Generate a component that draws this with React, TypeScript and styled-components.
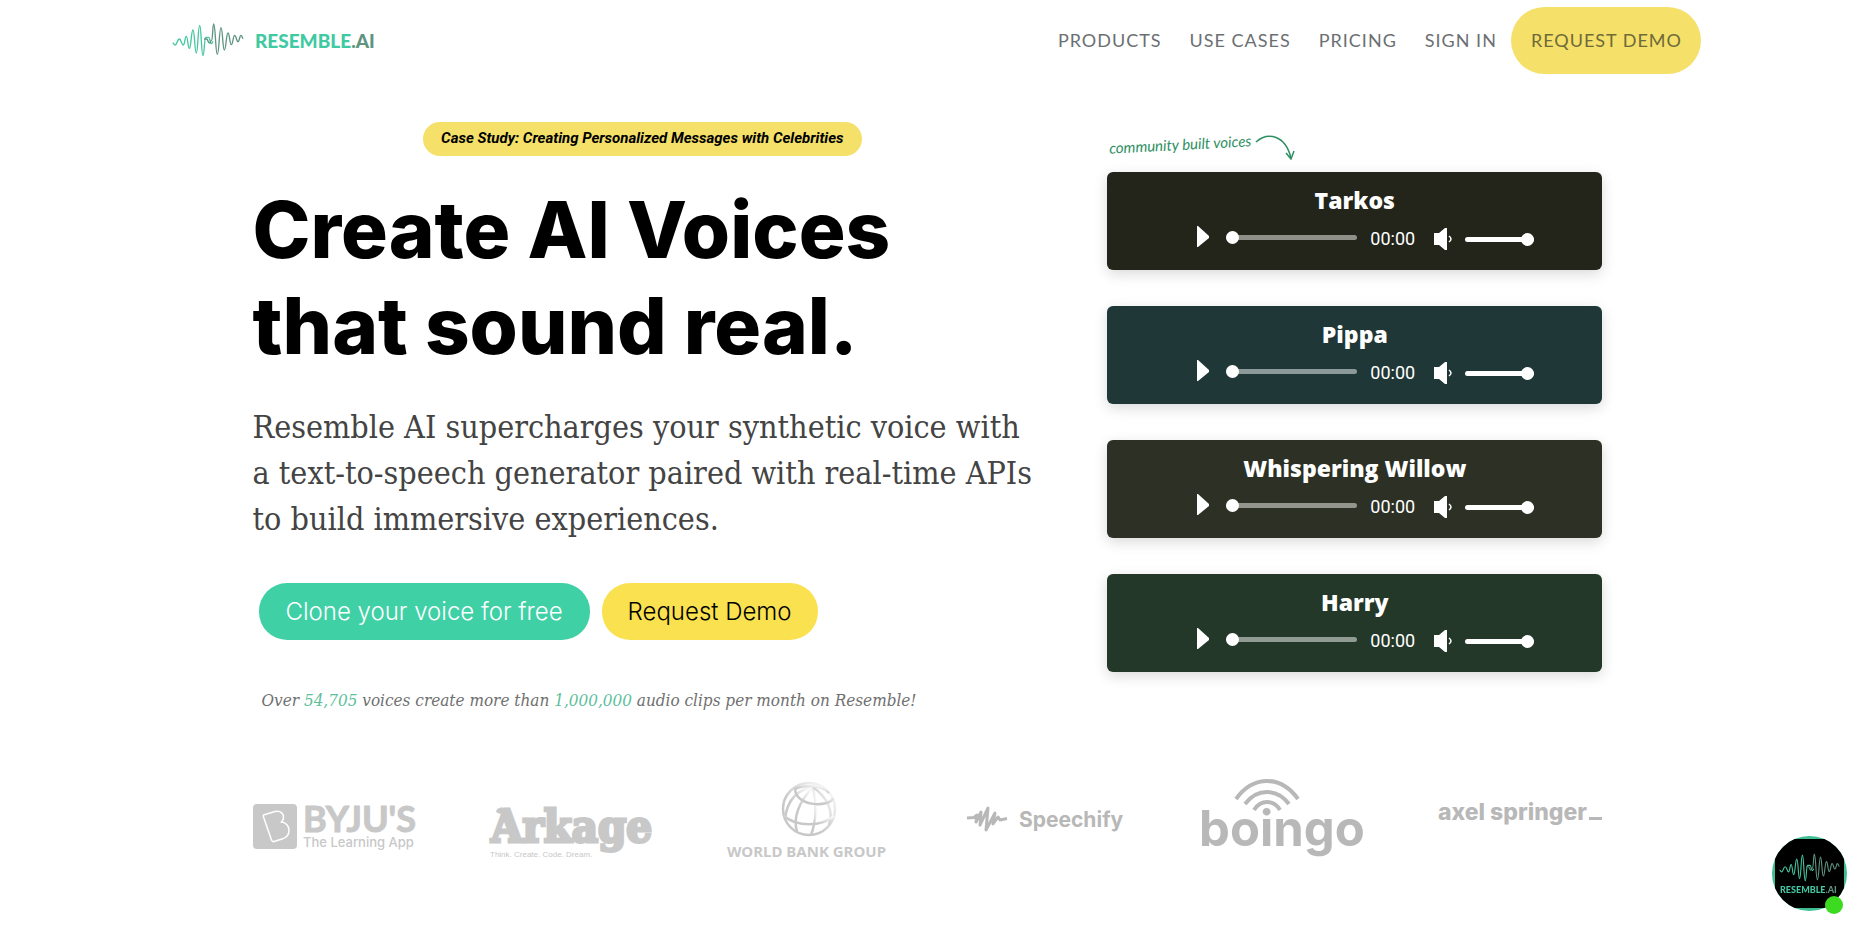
import React from "react";
import styled, { createGlobalStyle } from "styled-components";

const GlobalStyle = createGlobalStyle`
  * { box-sizing: border-box; }
  body { margin: 0; background: #fff; color: #000; font-family: Inter, sans-serif; }
  h1, h2, p { margin: 0; }
  a { color: inherit; text-decoration: none; }
`;

const slab = `"DejaVu Serif Condensed", "DejaVu Serif", serif`;

/* ---------- header ---------- */

const Header = styled.header`
  display: flex;
  align-items: center;
  justify-content: space-between;
  padding: 7px 164px 0 172px;
`;

const Brand = styled.a`
  display: flex;
  align-items: center;
  gap: 11px;
  font: 900 19px/24px Lato, sans-serif;
  color: #3fcaa2;
`;

const BrandSuffix = styled.span`
  color: #5f9480;
`;

const Nav = styled.nav`
  display: flex;
  align-items: center;
  font: 400 18px/24px Lato, sans-serif;
  letter-spacing: 1px;
  color: #6c6f72;
`;

const NavLink = styled.a`
  padding: 0 14px 2px;
`;

const NavDemo = styled.a`
  padding: 21px 19px 22px 20px;
  border-radius: 34px;
  background: #f5e069;
  color: #6f6a3a;
`;

/* ---------- hero ---------- */

const Main = styled.main`
  max-width: 1350px;
  margin: 48px auto 0;
  position: relative;
  right: 5px;
`;

const Hero = styled.section`
  display: grid;
  grid-template-columns: minmax(0, 779fr) minmax(0, 495fr);
  column-gap: 75px;
`;

const Pitch = styled.div`
  display: flex;
  flex-direction: column;
`;

const CaseStudy = styled.a`
  align-self: center;
  padding: 5px 18px 7px;
  border-radius: 17px;
  background: #f5e069;
  font: italic 700 15px/22px Roboto, sans-serif;
`;

const Title = styled.h1`
  margin-top: 26px;
  font: 800 78px/96px Inter, sans-serif;
`;

const Lead = styled.p`
  margin-top: 30px;
  font: 400 32px/46px ${slab};
  color: #444;
`;

const Actions = styled.div`
  display: flex;
  gap: 12px;
  margin: 41px 0 0 6px;
`;

const ActionButton = styled.button<{ $primary?: boolean }>`
  height: 57px;
  padding: 0 ${(p) => (p.$primary ? "27px" : "26px")};
  border: 0;
  border-radius: 28px;
  background: ${(p) => (p.$primary ? "#40d0a6" : "#fae14f")};
  color: ${(p) => (p.$primary ? "#fff" : "#000")};
  font: 300 24px/30px Inter, sans-serif;
`;

const Stats = styled.p`
  margin: 48px 0 0 9px;
  font: italic 400 17px/24px ${slab};
  color: #707070;
`;

const Figure = styled.span`
  color: #5dbf9c;
`;

/* ---------- players ---------- */

const Voices = styled.div`
  display: flex;
  flex-direction: column;
  gap: 36px;
  padding-top: 10px;
`;

const VoicesNote = styled.div`
  display: flex;
  align-items: flex-start;
  gap: 4px;
  height: 40px;
  margin-bottom: -36px;
  padding-left: 2px;
`;

const NoteText = styled.p`
  font: italic 400 15px/24px Lato, cursive;
  color: #2f8f63;
  transform: rotate(-3deg);
`;

const Player = styled.article<{ $tone: string }>`
  height: 98px;
  padding-top: 12px;
  border-radius: 6px;
  background: ${(p) => p.$tone};
  box-shadow: 0 4px 14px rgba(0, 0, 0, 0.15);
  color: #fff;
`;

const PlayerName = styled.h2`
  font: 800 23px/32px "Open Sans", sans-serif;
  text-align: center;
`;

const Controls = styled.div`
  display: flex;
  align-items: center;
  justify-content: center;
  height: 24px;
  margin-top: 11px;
  padding-left: 22px;
`;

const IconButton = styled.button`
  display: flex;
  padding: 0;
  border: 0;
  background: none;
  color: inherit;
`;

const PlayButton = styled(IconButton)`
  padding-bottom: 4px;
`;

const Slider = styled.input<{ $track: string }>`
  appearance: none;
  width: 131px;
  height: 13px;
  margin: 0 13px 4px 17px;
  background: none;

  &::-webkit-slider-runnable-track {
    height: 5px;
    border-radius: 3px;
    background: ${(p) => p.$track};
  }
  &::-webkit-slider-thumb {
    appearance: none;
    width: 13px;
    height: 13px;
    margin-top: -4px;
    border-radius: 50%;
    background: #fff;
  }
`;

const VolumeSlider = styled(Slider)`
  width: 69px;
  margin: 0 0 0 12px;
`;

const Time = styled.time`
  width: 45px;
  margin-right: 19px;
  font: 400 18px/24px Roboto, sans-serif;
`;

/* ---------- customers ---------- */

const Customers = styled.section`
  display: flex;
  justify-content: space-between;
  margin-top: 68px;
  padding-bottom: 56px;
`;

const Logo = styled.svg`
  width: 164px;
  height: 86px;
  overflow: visible;
  fill: #c8c8c8;
`;

/* ---------- chat ---------- */

const ChatButton = styled.button`
  position: fixed;
  right: 18px;
  bottom: 23px;
  width: 75px;
  height: 75px;
  padding: 0;
  border: 0;
  background: none;
`;

/* Extremes of the brand wave, joined by smooth half waves. */
const waveHead: [number, number][] = [
  [2, 60], [9, 66], [22, 48], [34, 66], [43, 40], [52, 76], [63, 21], [73, 90],
  [83, 7], [93, 98], [101, 43], [110, 43], [118, 62], [124, 56],
];
const waveTail: [number, number][] = [
  [96, 48], [104, 48], [112, 60], [119, 52], [125, 3], [136, 94], [147, 14], [157, 81],
  [168, 30], [178, 65], [188, 37], [198, 56], [207, 37], [214, 47],
];
const toPath = (pts: [number, number][]) =>
  pts.reduce((d, [x, y], i) => {
    if (i === 0) return `M${x} ${y}`;
    const [px, py] = pts[i - 1];
    const mid = (px + x) / 2;
    return `${d}C${mid} ${py} ${mid} ${y} ${x} ${y}`;
  }, "");

const WaveLines = () => (
  <g fill="none" strokeWidth="4">
    <path d={toPath(waveHead)} stroke="#46c6a0" />
    <path d={toPath(waveTail)} stroke="#5f9480" />
  </g>
);

const voices = [
  { name: "Tarkos", tone: "#23251b", track: "#8f9189" },
  { name: "Pippa", tone: "#203737", track: "#8c9999" },
  { name: "Whispering Willow", tone: "#2d3024", track: "#93958d" },
  { name: "Harry", tone: "#24382a", track: "#8f9b93" },
];

const VoicePlayer = ({ name, tone, track }: (typeof voices)[number]) => (
  <Player $tone={tone}>
    <PlayerName>{name}</PlayerName>
    <Controls>
      <PlayButton aria-label={`Play ${name}`}>
        <svg width="12" height="22" viewBox="0 0 12 22" fill="currentColor">
          <path d="M0 0H1L12 10V12L1 21H0Z" />
        </svg>
      </PlayButton>
      <Slider type="range" aria-label="Position" min={0} max={100} defaultValue={0} $track={track} />
      <Time>00:00</Time>
      <IconButton aria-label="Mute">
        <svg width="19" height="24" viewBox="0 0 19 24" fill="currentColor">
          <path d="M0 6H5L11 1H13V23H11L5 18H0Z" />
          <path d="M15 9Q19 12 15 15" fill="none" stroke="currentColor" strokeWidth="1.5" />
        </svg>
      </IconButton>
      <VolumeSlider type="range" aria-label="Volume" min={0} max={100} defaultValue={100} $track="#fff" />
    </Controls>
  </Player>
);

const ByjusLogo = () => (
  <Logo viewBox="0 0 164 86" role="img" aria-label="BYJU'S The Learning App">
    <rect y="24" width="44" height="45" rx="4" />
    <path
      d="M10.5 35L22 31.500C28 30.500 31 34 30.500 38C30 40 29.500 41 28.500 42C33 42.500 36 46 36 50C36 55 33 58 29 59L21 61.500C20 62 19 61 18.500 60L10.500 37Q10 35.500 10.500 35Z"
      fill="none"
      stroke="#fff"
      strokeWidth="1.5"
    />
    <text x="50" y="52" fontFamily="Lato" fontWeight="700" fontSize="36" stroke="#c8c8c8" strokeWidth="1" strokeLinejoin="round">
      BYJU'S
    </text>
    <text x="50" y="67" fontFamily="Inter" fontWeight="500" fontSize="13">The Learning App</text>
  </Logo>
);

const ArkageLogo = () => (
  <Logo viewBox="0 0 164 86" role="img" aria-label="Arkage">
    <text x="1" y="62" fontFamily="DejaVu Serif Condensed" fontWeight="700" fontSize="45" stroke="#c8c8c8" strokeWidth="3">
      Arkage
    </text>
    <path d="M7 29L12 27L15 31L10 34L6 32Z" />
    <text x="0" y="77" fontFamily="Liberation Sans" fontWeight="400" fontSize="8">Think. Create. Code. Dream.</text>
  </Logo>
);

const WorldBankLogo = () => (
  <Logo viewBox="0 0 164 86" role="img" aria-label="World Bank Group">
    <defs>
      <linearGradient id="globe" x1="0.35" y1="0.6" x2="0.85" y2="0.1">
        <stop offset="0" stopColor="#c8c8c8" />
        <stop offset="1" stopColor="#f6f6f6" />
      </linearGradient>
    </defs>
    <g fill="none" stroke="url(#globe)" strokeWidth="2.5">
      <circle cx="82" cy="29" r="26" />
      <path d="M86 7C72 22 66 38 70 52" />
      <path d="M86 7C90 24 89 42 84 55" />
      <path d="M86 7C101 18 107 32 102 45" />
      <path d="M86 7C70 10 60 20 58 39" />
      <path d="M68 8C68 28 104 27 106 18" />
      <path d="M57 36C70 47 94 47 107 36" />
      <path d="M68 9C76 5 94 4 102 13" />
    </g>
    <text x="0" y="77" fontFamily="Noto Sans" fontWeight="700" fontSize="15">WORLD BANK GROUP</text>
  </Logo>
);

const SpeechifyLogo = () => (
  <Logo viewBox="0 0 164 86" role="img" aria-label="Speechify">
    <path
      d="M3 38L10 37.500L13 35L12 42L17 32L16 45L24 28L22 50L31 33L29 44L34 37L36 40L43 38.500"
      fill="none"
      stroke="#b8b8b8"
      strokeWidth="3"
      strokeLinejoin="round"
    />
    <text x="55" y="47" fill="#b8b8b8" fontFamily="Inter" fontWeight="700" fontSize="21">Speechify</text>
  </Logo>
);

const BoingoLogo = () => (
  <Logo viewBox="0 0 164 86" role="img" aria-label="boingo">
    <g fill="none" stroke="#b8b8b8" strokeWidth="4">
      <path d="M35 19Q48 1 66 1Q84 1 97 19" />
      <path d="M44 24Q53 12 66 12Q79 12 88 24" />
      <path d="M53 30Q58 22 66 22Q74 22 79 30" />
    </g>
    <text x="-2" y="66" fill="#b8b8b8" fontFamily="Inter" fontWeight="700" fontSize="49">boingo</text>
  </Logo>
);

const AxelSpringerLogo = () => (
  <Logo viewBox="0 0 164 86" role="img" aria-label="axel springer">
    <text x="0" y="40" fill="#b8b8b8" fontFamily="Inter" fontWeight="800" fontSize="23">axel springer</text>
    <rect x="151" y="37" width="13" height="3" fill="#b8b8b8" />
  </Logo>
);

export default function App() {
  return (
    <>
      <GlobalStyle />
      <Header>
        <Brand href="#" aria-label="Resemble.AI">
          <svg width="72" height="35" viewBox="0 0 216 105"><WaveLines /></svg>
          <span>RESEMBLE<BrandSuffix>.AI</BrandSuffix></span>
        </Brand>
        <Nav>
          <NavLink href="#">PRODUCTS</NavLink>
          <NavLink href="#">USE CASES</NavLink>
          <NavLink href="#">PRICING</NavLink>
          <NavLink href="#">SIGN IN</NavLink>
          <NavDemo href="#">REQUEST DEMO</NavDemo>
        </Nav>
      </Header>
      <Main>
        <Hero>
          <Pitch>
            <CaseStudy href="#">Case Study: Creating Personalized Messages with Celebrities</CaseStudy>
            <Title>Create AI Voices<br />that sound real.</Title>
            <Lead>
              Resemble AI supercharges your synthetic voice with<br />
              a text-to-speech generator paired with real-time APIs<br />
              to build immersive experiences.
            </Lead>
            <Actions>
              <ActionButton $primary>Clone your voice for free</ActionButton>
              <ActionButton>Request Demo</ActionButton>
            </Actions>
            <Stats>
              Over <Figure>54,705</Figure> voices create more than <Figure>1,000,000</Figure> audio clips per month on Resemble!
            </Stats>
          </Pitch>
          <Voices>
            <VoicesNote>
              <NoteText>community built voices</NoteText>
              <svg width="40" height="28" viewBox="0 0 40 28" fill="none" stroke="#2f8f63" strokeWidth="1.5">
                <path d="M1 10C12 0 30 2 36 26" />
                <path d="M31 21L36 27L39 19" />
              </svg>
            </VoicesNote>
            {voices.map((v) => <VoicePlayer key={v.name} {...v} />)}
          </Voices>
        </Hero>
        <Customers>
          <ByjusLogo />
          <ArkageLogo />
          <WorldBankLogo />
          <SpeechifyLogo />
          <BoingoLogo />
          <AxelSpringerLogo />
        </Customers>
      </Main>
      <ChatButton aria-label="Open chat">
        <svg width="75" height="80" viewBox="0 0 75 80">
          <defs>
            <clipPath id="avatar"><circle cx="37.5" cy="37.5" r="37.5" /></clipPath>
          </defs>
          <g clipPath="url(#avatar)">
            <rect width="75" height="75" fill="#3fbd95" />
            <rect x="3" y="3" width="69" height="69" />
            <svg x="7" y="17" width="61" height="30" viewBox="0 0 216 105"><WaveLines /></svg>
            <text x="8" y="57" fontFamily="Lato" fontWeight="900" fontSize="9" fill="#46c6a0">
              RESEMBLE<tspan fill="#5f9480">.AI</tspan>
            </text>
          </g>
          <circle cx="62" cy="69" r="9" fill="#3cdb22" />
        </svg>
      </ChatButton>
    </>
  );
}
